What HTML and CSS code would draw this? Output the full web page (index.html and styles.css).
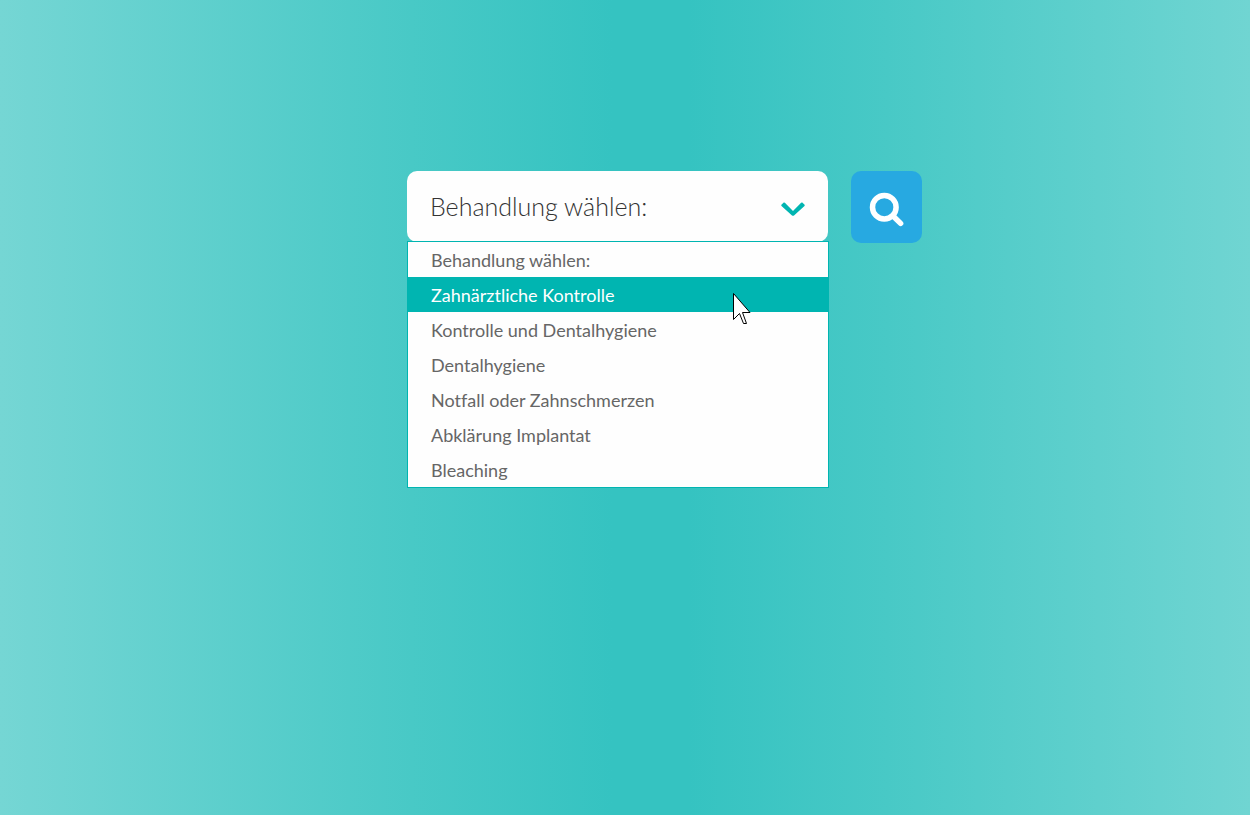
FILE: index.html
```
<!DOCTYPE html>
<html lang="de">
    <head>
        <meta charset="utf-8">
        <title>Behandlung wählen</title>
        <meta name="viewport" content="width=device-width, initial-scale=1.0">
        <link rel="stylesheet" href="styles.css">
    </head>
    <body>
        <form class="search">
            <div class="select-box">
                <select class="select" aria-label="Behandlung">
                    <option>Behandlung wählen:</option>
                    <option>Zahnärztliche Kontrolle</option>
                    <option>Kontrolle und Dentalhygiene</option>
                    <option>Dentalhygiene</option>
                    <option>Notfall oder Zahnschmerzen</option>
                    <option>Abklärung Implantat</option>
                    <option>Bleaching</option>
                </select>
                <svg class="arrow" viewBox="0 0 24 16" aria-hidden="true">
                    <path d="M0.4 2.7L2.7 0.6Q3.3 0.3 3.9 0.8L12 9L20.1 0.8Q20.7 0.3 21.3 0.6L23.6 2.7Q24 3.3 23.5 3.9L13 13.4Q12 14.2 11 13.4L0.5 3.9Q0 3.3 0.4 2.7Z"/>
                </svg>

                <!-- opened list -->
                <ul class="options">
                    <li><button type="button" class="option">Behandlung wählen:</button></li>
                    <li><button type="button" class="option active">Zahnärztliche Kontrolle</button></li>
                    <li><button type="button" class="option">Kontrolle und Dentalhygiene</button></li>
                    <li><button type="button" class="option">Dentalhygiene</button></li>
                    <li><button type="button" class="option">Notfall oder Zahnschmerzen</button></li>
                    <li><button type="button" class="option">Abklärung Implantat</button></li>
                    <li><button type="button" class="option">Bleaching</button></li>
                </ul>

                <svg class="cursor" viewBox="0 0 20 34" aria-hidden="true">
                    <path d="M1.5 1.5V27.5L7.5 21.5L11.5 31.5H14.5L10.5 20.5H18Z"/>
                </svg>
            </div>

            <button type="submit" class="btn-search" aria-label="Suchen">
                <svg viewBox="0 0 36 36" aria-hidden="true">
                    <circle cx="15.3" cy="15.2" r="11.8"/>
                    <path d="M24.3 24.3L31.6 31.4"/>
                </svg>
            </button>
        </form>
    </body>
</html>
```
FILE: styles.css
```
/* ---- General ---- */
* {
    box-sizing: border-box;
    font-family: Lato, sans-serif;
    font-variant-ligatures: none;
}

body {
    background: linear-gradient(to right, #75d6d4 0%, #48c9c6 33%, #35c3c1 49%, #35c3c1 55%, #48c9c6 71%, #70d5d2 100%);
    margin: 0;
    min-height: 100vh;
    padding: 171px 24px 24px 103px;
}

/* ---- Search ---- */
.search {
    align-items: flex-start;
    display: flex;
    gap: 23px;
    justify-content: center;
}

.select-box {
    flex: 0 1 421px;
    position: relative;
}

.select {
    appearance: none;
    -webkit-appearance: none;
    background-color: #fefefe;
    border: 0;
    border-radius: 10px;
    color: #333;
    display: block;
    font-size: 25px;
    font-weight: 300;
    height: 71px;
    padding: 0 48px 2px 23px;
    width: 100%;
}

.arrow {
    fill: #00b5b1;
    height: 16px;
    pointer-events: none;
    position: absolute;
    right: 23px;
    top: 31px;
    width: 24px;
}

/* ---- Options ---- */
.options {
    background-color: #fefefe;
    border: 1px solid #00b5b1;
    left: 0;
    list-style: none;
    margin: 0;
    padding: 0;
    position: absolute;
    right: -1px;
    top: 70px;
}

.option {
    background: none;
    border: 0;
    color: #666;
    display: block;
    font-size: 18px;
    height: 35px;
    line-height: 33px;
    padding: 2px 23px 0;
    text-align: left;
    width: 100%;
}

.option.active {
    background-color: #00b5b1;
    color: #fff;
}

.cursor {
    fill: #fff;
    height: 34px;
    pointer-events: none;
    position: absolute;
    right: 76px;
    stroke: #000;
    stroke-width: 1;
    top: 121px;
    width: 20px;
}

/* ---- Search Button ---- */
.btn-search {
    align-items: center;
    background-color: #27a9e1;
    border: 0;
    border-radius: 10px;
    display: flex;
    flex: none;
    height: 72px;
    justify-content: center;
    padding: 5px 0 0;
    width: 71px;
}

.btn-search svg {
    fill: none;
    height: 36px;
    stroke: #fff;
    stroke-linecap: round;
    stroke-width: 5.5;
    width: 36px;
}
```
